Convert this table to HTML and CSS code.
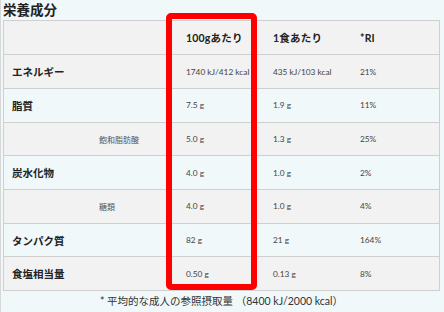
FILE: index.html
```html
<!DOCTYPE html>
<html lang="ja">
<head>
<meta charset="utf-8">
<link rel="stylesheet" href="styles.css">
</head>
<body>
<div class="wrap">
  <h2 class="title">栄養成分</h2>
  <table class="nut">
    <thead>
      <tr>
        <th class="c1"></th>
        <th>100gあたり</th>
        <th>1食あたり</th>
        <th>*RI</th>
      </tr>
    </thead>
    <tbody>
      <tr class="alt"><td class="c1 lbl">エネルギー</td><td>1740 kJ/412 kcal</td><td>435 kJ/103 kcal</td><td>21%</td></tr>
      <tr><td class="c1 lbl">脂質</td><td>7.5 g</td><td>1.9 g</td><td>11%</td></tr>
      <tr class="alt"><td class="c1 sub">飽和脂肪酸</td><td>5.0 g</td><td>1.3 g</td><td>25%</td></tr>
      <tr><td class="c1 lbl">炭水化物</td><td>4.0 g</td><td>1.0 g</td><td>2%</td></tr>
      <tr class="alt"><td class="c1 sub">糖類</td><td>4.0 g</td><td>1.0 g</td><td>4%</td></tr>
      <tr><td class="c1 lbl">タンパク質</td><td>82 g</td><td>21 g</td><td>164%</td></tr>
      <tr class="alt"><td class="c1 lbl">食塩相当量</td><td>0.50 g</td><td>0.13 g</td><td>8%</td></tr>
    </tbody>
  </table>
  <p class="note">* 平均的な成人の参照摂取量 （8400 kJ/2000 kcal）</p>
  <div class="highlight"></div>
</div>
</body>
</html>
```

FILE: styles.css
```css
html, body {
  margin: 0;
  padding: 0;
  background: #f0f8fa;
}
body {
  font-family: "Lato", "Noto Sans CJK JP", sans-serif;
  color: #222;
}
.wrap {
  position: relative;
  height: 312px;
  box-sizing: border-box;
  border-left: 1px solid #d8d8d8;
  padding: 0 4px 0 2px;
}
.title {
  margin: 0;
  height: 20px;
  line-height: 20px;
  font-size: 13.5px;
  font-weight: 700;
  color: #222;
}
.nut {
  width: 100%;
  border-collapse: separate;
  border-spacing: 0;
  border: 1px solid #cfcfcf;
  table-layout: fixed;
}
.nut th, .nut td {
  box-sizing: border-box;
  height: 33.7px;
  padding: 0 8px;
  text-align: left;
  vertical-align: middle;
  border-top: 1px solid #cfcfcf;
  width: 20%;
}
.nut th.c1, .nut td.c1 {
  width: 40%;
}
.nut thead th {
  border-top: none;
  height: 33.3px;
  background: #f2f2f2;
  font-size: 10.5px;
  font-weight: 700;
  color: #222;
  letter-spacing: 0.2px;
}
.nut td {
  font-size: 8.3px;
  color: #444;
}
.nut tr.alt td {
  background: #f2f2f2;
}
.nut td.lbl {
  font-size: 10.5px;
  font-weight: 700;
  color: #222;
}
.nut td.sub {
  font-size: 8px;
  color: #555;
  padding-left: 95px;
}
.note {
  margin: 0;
  height: 20px;
  line-height: 20px;
  text-align: center;
  font-size: 10.5px;
  color: #333;
}
.highlight {
  position: absolute;
  left: 165px;
  top: 13px;
  width: 91px;
  height: 277px;
  box-sizing: border-box;
  border: 6px solid #fe0000;
  border-radius: 5px;
}
```
